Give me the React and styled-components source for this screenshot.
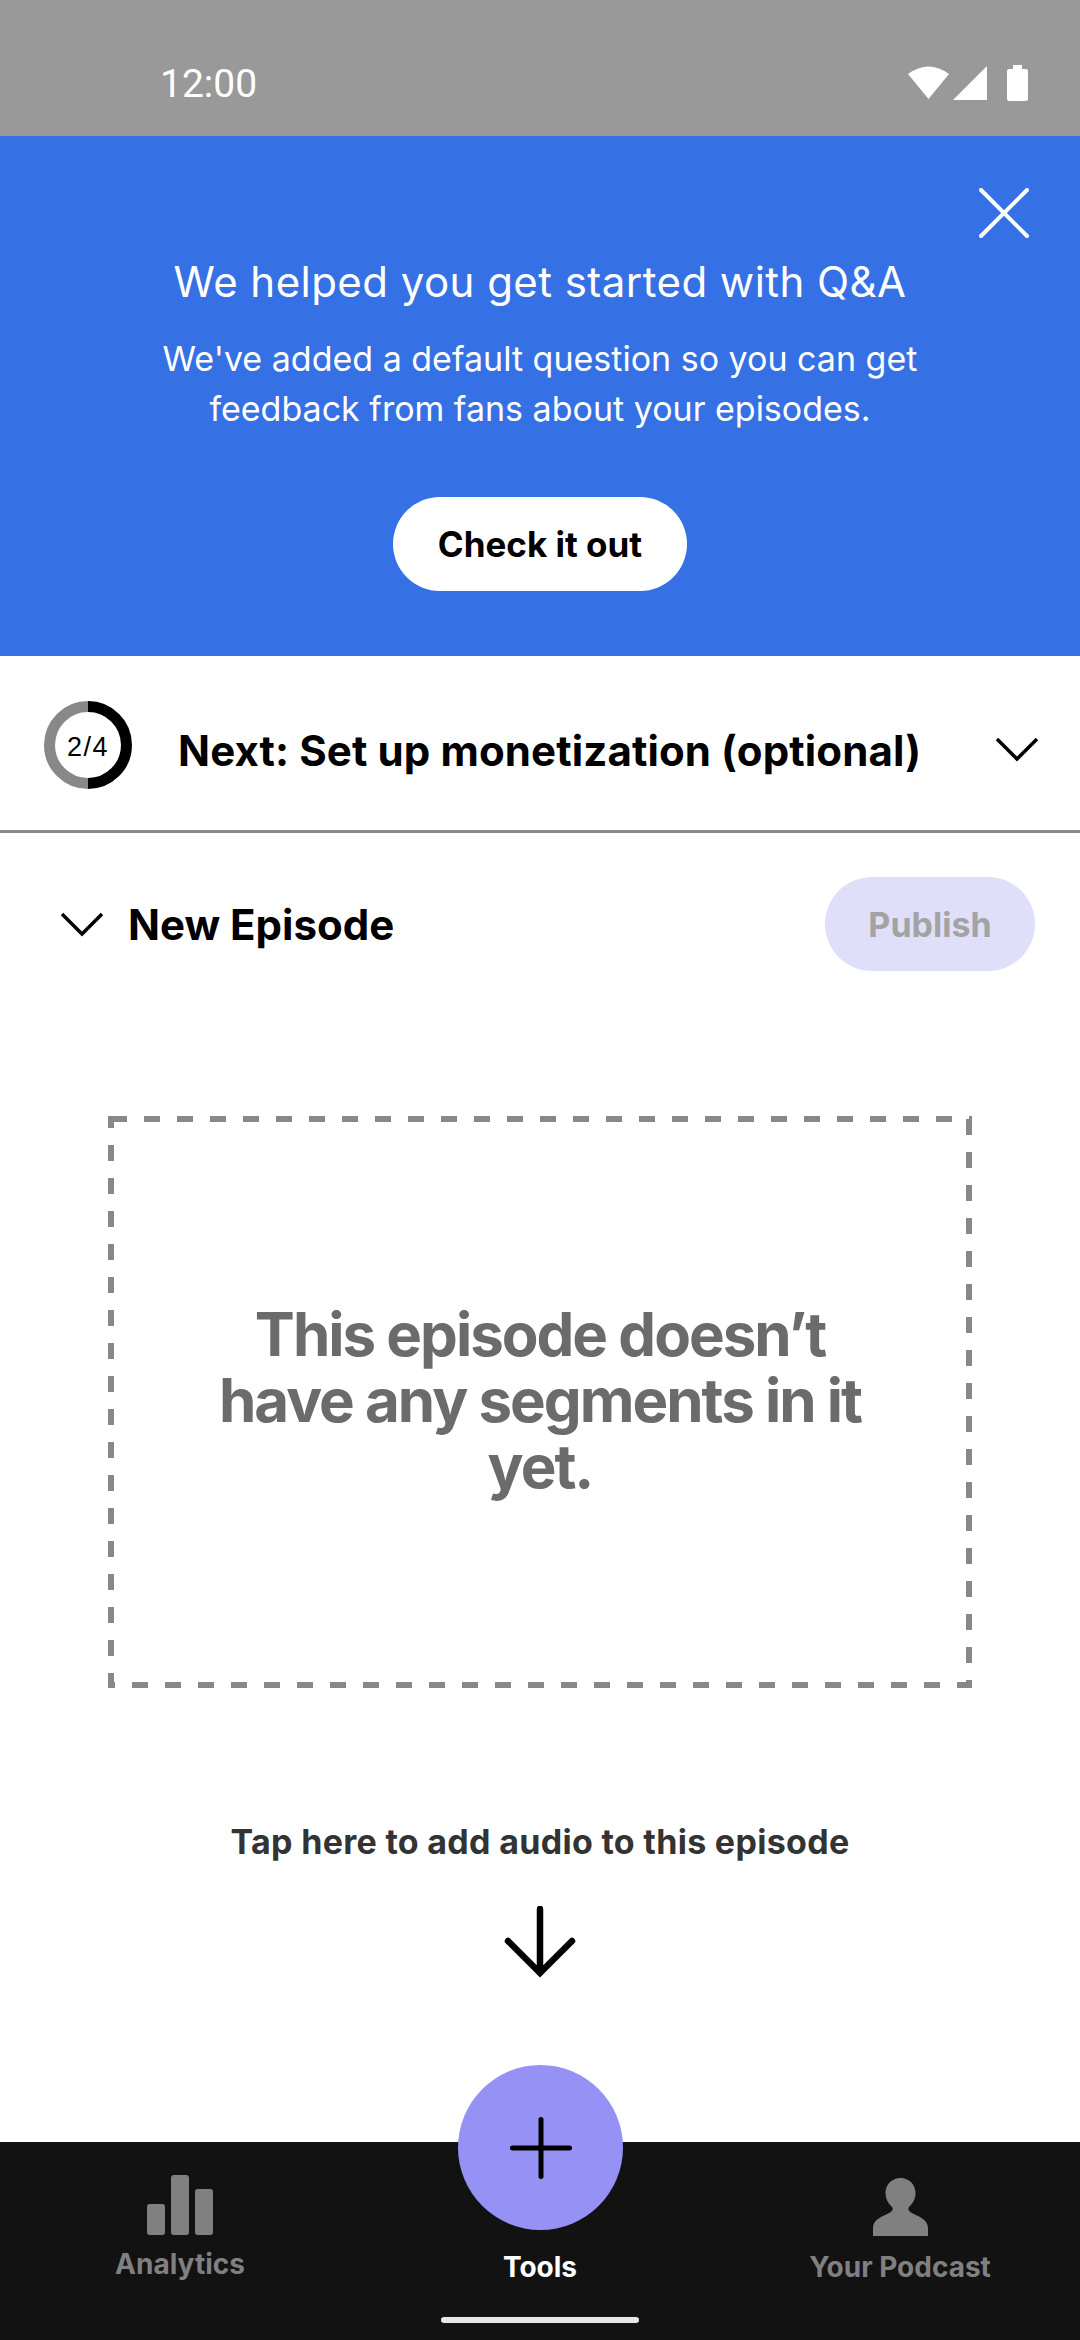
import React from 'react';
import styled, {createGlobalStyle} from 'styled-components';

const GlobalStyle = createGlobalStyle`
  html, body {
    margin: 0;
    padding: 0;
    background: #fff;
  }
  * {
    box-sizing: border-box;
  }
`;

const FONT = `"Inter", "Liberation Sans", sans-serif`;
const DASH = '#888888';

const Screen = styled.div`
  width: 1080px;
  height: 2340px;
  display: flex;
  flex-direction: column;
  overflow: hidden;
  font-family: ${FONT};
  background: #fff;
`;

const StatusBar = styled.div`
  height: 136px;
  flex: none;
  background: #999999;
  display: flex;
  align-items: flex-start;
  justify-content: space-between;
  padding: 65px 52px 0 160px;
  color: #fff;
`;

const Clock = styled.div`
  font-family: "Roboto", sans-serif;
  font-size: 39px;
  line-height: 38px;
`;

const StatusIcons = styled.div`
  display: flex;
  align-items: flex-start;
`;

const SignalIcon = styled.svg`
  margin: 1px 20px 0 4px;
`;

const Banner = styled.div`
  position: relative;
  height: 520px;
  flex: none;
  background: #3571e4;
  color: #fff;
  display: flex;
  flex-direction: column;
  align-items: center;
  padding-top: 120px;
`;

const CloseButton = styled.div`
  position: absolute;
  top: 52px;
  right: 51px;
  line-height: 0;
`;

const BannerTitle = styled.div`
  font-size: 42px;
  line-height: 52px;
  letter-spacing: 0.45px;
`;

const BannerText = styled.div`
  margin-top: 26px;
  font-size: 34px;
  line-height: 50px;
  text-align: center;
`;

const CheckButton = styled.div`
  margin-top: 63px;
  width: 294px;
  height: 94px;
  border-radius: 47px;
  background: #fff;
  color: #000;
  font-size: 35px;
  font-weight: 700;
  display: flex;
  align-items: center;
  justify-content: center;
`;

const NextRow = styled.div`
  height: 177px;
  flex: none;
  display: flex;
  align-items: center;
  padding: 3px 41px 0 44px;
  border-bottom: 3px solid ${DASH};
`;

const Progress = styled.div`
  position: relative;
  width: 88px;
  height: 88px;
  flex: none;
  display: flex;
  align-items: center;
  justify-content: center;
  padding-top: 5px;
  font-family: "Liberation Sans", sans-serif;
  font-size: 27px;
  letter-spacing: 1.5px;
  color: #000;
`;

const ProgressRing = styled.svg`
  position: absolute;
  inset: 0;
`;

const NextTitle = styled.div`
  margin-left: 46px;
  padding-top: 11px;
  flex: 1;
  font-size: 42px;
  font-weight: 700;
  letter-spacing: 0.12px;
  color: #000;
`;

const NextChevron = styled.div`
  padding-top: 8px;
  line-height: 0;
`;

const EpisodeRow = styled.div`
  flex: none;
  display: flex;
  align-items: center;
  justify-content: space-between;
  padding: 44px 45px 0 60px;
`;

const EpisodeTitle = styled.div`
  display: flex;
  align-items: center;
  gap: 24px;
  font-size: 42px;
  font-weight: 700;
  color: #000;
`;

const PublishButton = styled.div`
  width: 210px;
  height: 94px;
  border-radius: 47px;
  background: #dfdffa;
  color: #a3a3a3;
  font-size: 34px;
  font-weight: 700;
  display: flex;
  align-items: center;
  justify-content: center;
`;

const DropZone = styled.div`
  margin: 145px 0 0 108px;
  width: 864px;
  height: 572px;
  flex: none;
  display: flex;
  align-items: center;
  justify-content: center;
  text-align: center;
  font-size: 60px;
  font-weight: 700;
  line-height: 66px;
  letter-spacing: -2px;
  color: #6b6b6b;
  padding: 0 100px 4px;
  background-image:
    linear-gradient(to right, ${DASH} 50%, transparent 50%),
    linear-gradient(to right, ${DASH} 50%, transparent 50%),
    linear-gradient(to bottom, ${DASH} 50%, transparent 50%),
    linear-gradient(to bottom, ${DASH} 50%, transparent 50%);
  background-size: 33px 6px, 33px 6px, 6px 33px, 6px 33px;
  background-repeat: repeat-x, repeat-x, repeat-y, repeat-y;
  background-position: 3px 0, 24px 100%, 0 29px, 100% 3px;
`;

const Hint = styled.div`
  margin-top: 132px;
  text-align: center;
  font-size: 34px;
  line-height: 44px;
  letter-spacing: 0.3px;
  font-weight: 700;
  color: #333;
`;

const ArrowWrap = styled.div`
  margin-top: 42px;
  display: flex;
  justify-content: center;
  line-height: 0;
`;

const Spacer = styled.div`
  flex: 1;
`;

const TabBar = styled.div`
  position: relative;
  height: 198px;
  flex: none;
  background: #121212;
  display: grid;
  grid-template-columns: repeat(3, 360px);
`;

const Tab = styled.div`
  display: flex;
  flex-direction: column;
  align-items: center;
  justify-content: flex-end;
  height: 142px;
  padding-bottom: ${props => (props.$raised ? 3 : 0)}px;
  gap: ${props => (props.$raised ? 12 : 14)}px;
  font-size: 28px;
  line-height: 34px;
  font-weight: 700;
  color: ${props => (props.$active ? '#fff' : '#808080')};
`;

const Fab = styled.div`
  position: absolute;
  top: -77px;
  left: 458px;
  width: 165px;
  height: 165px;
  border-radius: 50%;
  background: #9691f5;
  display: flex;
  align-items: center;
  justify-content: center;
`;

const HomeIndicator = styled.div`
  position: absolute;
  bottom: 17px;
  left: 441px;
  width: 198px;
  height: 6px;
  border-radius: 3px;
  background: #e8e8e8;
`;

function Chevron() {
    return (
        <svg width="44" height="26" viewBox="0 0 44 26" fill="none" stroke="#000" strokeWidth="3.5">
            <path d="M2 3 L22 23 L42 3" />
        </svg>
    );
}

export default function App() {
    return (
        <Screen>
            <GlobalStyle />
            <StatusBar>
                <Clock>12:00</Clock>
                <StatusIcons>
                    <svg width="41" height="34" viewBox="0 0 41 34" fill="#fff">
                        <path d="M0 9 Q20.5 -6 41 9 L20.5 34 Z" />
                    </svg>
                    <SignalIcon width="34" height="34" viewBox="0 0 34 34" fill="#fff">
                        <path d="M34 0 V34 H0 Z" />
                    </SignalIcon>
                    <svg width="21" height="36" viewBox="0 0 21 36" fill="#fff">
                        <path d="M6 0 H15 V4 H19 Q21 4 21 6 V34 Q21 36 19 36 H2 Q0 36 0 34 V6 Q0 4 2 4 H6 Z" />
                    </svg>
                </StatusIcons>
            </StatusBar>
            <Banner>
                <CloseButton>
                    <svg width="50" height="50" viewBox="0 0 50 50" stroke="#fff" strokeWidth="4" strokeLinecap="round">
                        <path d="M2 2 L48 48 M48 2 L2 48" />
                    </svg>
                </CloseButton>
                <BannerTitle>We helped you get started with Q&amp;A</BannerTitle>
                <BannerText>
                    We've added a default question so you can get<br />
                    feedback from fans about your episodes.
                </BannerText>
                <CheckButton>Check it out</CheckButton>
            </Banner>
            <NextRow>
                <Progress>
                    <ProgressRing width="88" height="88" viewBox="0 0 88 88" fill="none" strokeWidth="11">
                        <path d="M44 5.5 A38.5 38.5 0 0 0 44 82.5" stroke={DASH} />
                        <path d="M44 5.5 A38.5 38.5 0 0 1 44 82.5" stroke="#000" />
                    </ProgressRing>
                    2/4
                </Progress>
                <NextTitle>Next: Set up monetization (optional)</NextTitle>
                <NextChevron><Chevron /></NextChevron>
            </NextRow>
            <EpisodeRow>
                <EpisodeTitle>
                    <Chevron />
                    New Episode
                </EpisodeTitle>
                <PublishButton>Publish</PublishButton>
            </EpisodeRow>
            <DropZone>This episode doesn’t have any segments in it yet.</DropZone>
            <Hint>Tap here to add audio to this episode</Hint>
            <ArrowWrap>
                <svg width="72" height="72" viewBox="0 0 72 72" fill="none" stroke="#000" strokeWidth="6.5" strokeLinecap="round">
                    <path d="M36 3 V66 M4 35 L36 67 L68 35" />
                </svg>
            </ArrowWrap>
            <Spacer />
            <TabBar>
                <Tab $raised>
                    <svg width="66" height="60" viewBox="0 0 66 60" fill="#808080">
                        <rect x="0" y="29" width="18" height="31" rx="3" />
                        <rect x="24" y="0" width="18" height="60" rx="3" />
                        <rect x="48" y="14" width="18" height="46" rx="3" />
                    </svg>
                    Analytics
                </Tab>
                <Tab $active>Tools</Tab>
                <Tab>
                    <svg width="55" height="58" viewBox="0 0 55 58" fill="#808080">
                        <path d="M27.5 0 C36 0 42.5 6.5 42.5 15 C42.5 22 39 26 36 29 C34.5 31 35.5 33 38 34.5 C44 38 55 41 55 50 V58 H0 V50 C0 41 11 38 17 34.5 C19.5 33 20.5 31 19 29 C16 26 12.5 22 12.5 15 C12.5 6.5 19 0 27.5 0 Z" />
                    </svg>
                    Your Podcast
                </Tab>
                <Fab>
                    <svg width="62" height="62" viewBox="0 0 62 62" stroke="#000" strokeWidth="5" strokeLinecap="round">
                        <path d="M31 2.5 V59.5 M2.5 31 H59.5" />
                    </svg>
                </Fab>
                <HomeIndicator />
            </TabBar>
        </Screen>
    );
}
